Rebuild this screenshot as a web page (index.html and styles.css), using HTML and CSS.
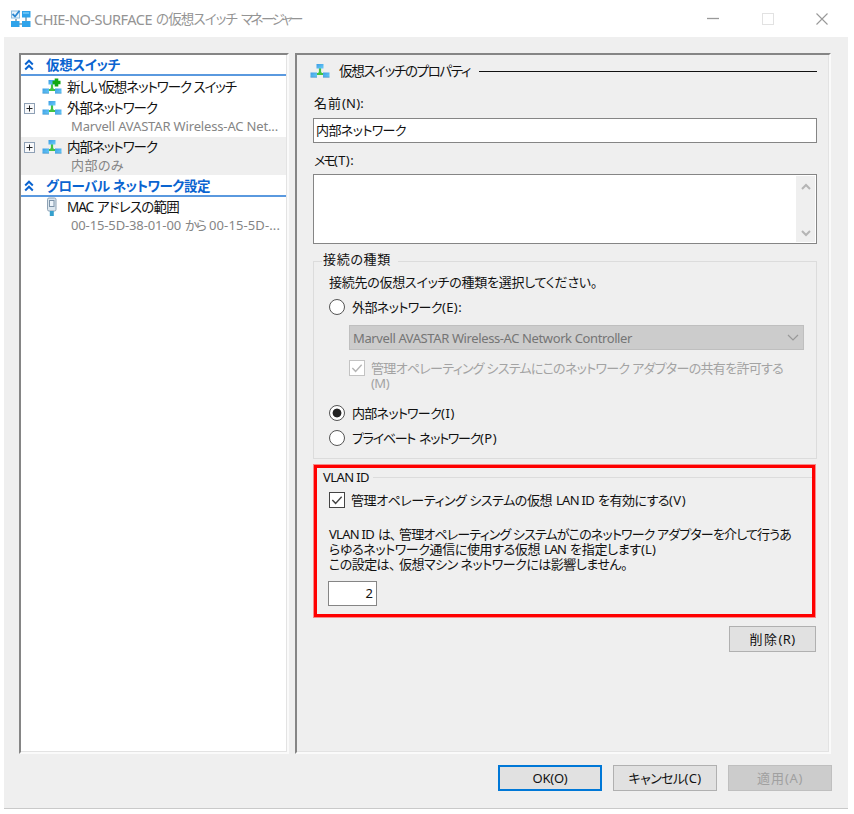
FILE: index.html
```
<!DOCTYPE html>
<html lang="ja">
<head>
<meta charset="utf-8">
<title>仮想スイッチ マネージャー</title>
<link rel="stylesheet" href="styles.css">
</head>
<body>
<svg class="defs" width="0" height="0">
  <defs>
    <linearGradient id="node" x1="0" y1="0" x2="1" y2="1"><stop offset="0" stop-color="#3b9ce4"/><stop offset="1" stop-color="#6accf8"/></linearGradient>
    <symbol id="switch" viewBox="0 0 20 16">
      <path d="M10 5v6M7 11h6" stroke="#43c443" stroke-width="2.2" fill="none"/>
      <path d="M7 12 10 7l3 5z" fill="#43c443"/>
      <rect x="6.500" y="1" width="7" height="4.500" fill="url(#node)"/>
      <rect x="0.500" y="9.500" width="6.500" height="4.500" fill="url(#node)"/>
      <rect x="13" y="9.500" width="6.500" height="4.500" fill="url(#node)"/>
      <path d="M.5 14.200h6.500M13 14.200h6.500" stroke="#348dcd" stroke-width=".8"/>
    </symbol>
    <symbol id="chev" viewBox="0 0 10 12"><path d="M1.200 5.500 5 1.700l3.800 3.800M1.200 10.500 5 6.700l3.800 3.800" fill="none" stroke="#0a64d0" stroke-width="2"/></symbol>
    <symbol id="tick" viewBox="0 0 15 15"><path d="m2.500 7.500 3.500 3.600 6.500-7" fill="none" stroke="currentColor" stroke-width="1.500"/></symbol>
  </defs>
</svg>
<div class="window">
  <header class="titlebar">
    <svg class="app-icon" width="20" height="18" viewBox="0 0 20 18">
      <path d="M5 9v4M15 6v7M5 14h10" stroke="#7c9aac" stroke-width="1.500" fill="none"/>
      <rect x=".5" y="1" width="8" height="7" fill="#e8f3fb" stroke="#8cbcdf"/>
      <path d="m1.500 4 2.500 2.500L8.500.8" fill="none" stroke="#2b87d1" stroke-width="1.800"/>
      <rect x="11" y="1" width="8.500" height="6.500" fill="#2fa3ea"/><rect x="12" y="2" width="6" height="2" fill="#65c1f5"/>
      <rect x="0" y="11" width="8.500" height="6" fill="#2fa3ea"/><rect x="11" y="11" width="8.500" height="6" fill="#2fa3ea"/>
    </svg>
    <span class="title"><span data-w="118">CHIE-NO-SURFACE</span><span class="gap"></span><span class="title-ja" data-w="81">の仮想スイッチ</span><span class="gap"></span><span class="title-ja" data-w="60">マネージャー</span></span>
    <div class="controls">
      <svg width="12" height="12"><path d="M0 5.500h12" stroke="#999" stroke-width="1.300"/></svg>
      <svg width="12" height="12"><rect x=".5" y=".5" width="11" height="11" fill="none" stroke="#e2e2e2"/></svg>
      <svg width="12" height="12"><path d="m.5.5 11 11M11.500.5l-11 11" stroke="#999" stroke-width="1.100"/></svg>
    </div>
  </header>
  <main class="content">
    <div class="panels">
      <nav class="panel tree">
        <div class="section"><svg class="chev"><use href="#chev"/></svg><b data-w="74">仮想スイッチ</b></div>
        <div class="item first">
          <span class="expander none"></span>
          <svg class="sw" viewBox="0 0 20 16"><use href="#switch"/><path d="M14.500-.5v8M10.500 3.500h8" stroke="#11a811" stroke-width="3.600"/></svg>
          <span data-w="169">新しい仮想ネットワーク スイッチ</span>
        </div>
        <div class="item">
          <svg class="expander" viewBox="0 0 11 11"><rect x=".5" y=".5" width="10" height="10" fill="#f7f8fa" stroke="#8ea0b5"/><path d="M2.500 5.500h6M5.500 2.500v6" stroke="#222"/></svg>
          <svg class="sw"><use href="#switch"/></svg><span data-w="90">外部ネットワーク</span>
        </div>
        <div class="sub"><span data-w="207">Marvell AVASTAR Wireless-AC Net...</span></div>
        <div class="selected">
          <div class="item">
            <svg class="expander" viewBox="0 0 11 11"><rect x=".5" y=".5" width="10" height="10" fill="#f7f8fa" stroke="#8ea0b5"/><path d="M2.500 5.500h6M5.500 2.500v6" stroke="#222"/></svg>
            <svg class="sw"><use href="#switch"/></svg><span data-w="90">内部ネットワーク</span>
          </div>
          <div class="sub"><span data-w="53">内部のみ</span></div>
        </div>
        <div class="section"><svg class="chev"><use href="#chev"/></svg><b data-w="164">グローバル ネットワーク設定</b></div>
        <div class="item mac">
          <span class="expander none"></span>
          <svg class="sw" viewBox="0 0 20 20"><rect x="5.500" y="1" width="8.500" height="13" rx="1.500" fill="#dce6ee" stroke="#8ea2b5"/><rect x="7.500" y="3.500" width="4.500" height="6" fill="#edf4fa" stroke="#7d93a8"/><path d="M9.800 14v5" stroke="#35a0cd" stroke-width="4"/></svg>
          <span data-w="26">MAC</span><span class="gap"></span><span data-w="82">アドレスの範囲</span>
        </div>
        <div class="sub"><span data-w="110">00-15-5D-38-01-00</span><span class="gap"></span><span data-w="20">から</span><span class="gap"></span><span data-w="71">00-15-5D-...</span></div>
      </nav>
      <section class="panel props">
        <div class="heading"><svg class="sw"><use href="#switch"/></svg><span data-w="131">仮想スイッチのプロパティ</span><i></i></div>
        <div class="row name-label"><span data-w="28">名前</span><span data-w="22">(N):</span></div>
        <div class="input name"><span data-w="90">内部ネットワーク</span></div>
        <div class="row memo-label"><span data-w="20">メモ</span><span data-w="20">(T):</span></div>
        <div class="input memo">
          <div class="scroll">
            <svg width="10" height="8"><path d="m1 6 4-4 4 4" /></svg>
            <svg width="10" height="8"><path d="m1 2 4 4 4-4" /></svg>
          </div>
        </div>
        <div class="group connection">
          <div class="legend"><span data-w="68">接続の種類</span></div>
          <div class="row desc"><span data-w="268">接続先の仮想スイッチの種類を選択してください。</span></div>
          <div class="row ext"><span class="radio"></span><span data-w="90">外部ネットワーク</span><span data-w="20">(E):</span></div>
          <div class="combo"><span data-w="279">Marvell AVASTAR Wireless-AC Network Controller</span><svg width="12" height="8"><path d="m1 1 5 5 5-5" fill="none" stroke="#999" stroke-width="1.200"/></svg></div>
          <div class="row share"><svg class="check"><use href="#tick"/></svg><span data-w="412">管理オペレーティング システムにこのネットワーク アダプターの共有を許可する</span></div>
          <div class="row share-key"><span data-w="18">(M)</span></div>
          <div class="row int"><span class="radio on"></span><span data-w="89">内部ネットワーク</span><span data-w="14">(I)</span></div>
          <div class="row priv"><span class="radio"></span><span data-w="63">プライベート</span><span class="gap"></span><span data-w="61">ネットワーク</span><span data-w="17">(P)</span></div>
        </div>
        <div class="highlight">
          <div class="vlan-title"><span data-w="46">VLAN ID</span><i></i></div>
          <div class="row enable"><svg class="check"><use href="#tick"/></svg><span data-w="201">管理オペレーティング システムの仮想</span><span class="gap"></span><span data-w="38">LAN ID</span><span class="gap"></span><span data-w="71">を有効にする</span><span data-w="17">(V)</span></div>
          <div class="note">
            <div><span data-w="45">VLAN ID</span><span class="gap"></span><span data-w="17">は、</span><span class="gap"></span><span data-w="392">管理オペレーティング システムがこのネットワーク アダプターを介して行うあ</span></div>
            <div><span data-w="211">らゆるネットワーク通信に使用する仮想</span><span class="gap"></span><span data-w="22">LAN</span><span class="gap"></span><span data-w="71">を指定します</span><span data-w="15">(L)</span></div>
            <div><span data-w="66">この設定は、</span><span class="gap"></span><span data-w="228">仮想マシン ネットワークには影響しません。</span></div>
          </div>
          <div class="input vlan"><span>2</span></div>
        </div>
        <div class="button delete"><span data-w="29">削除</span><span data-w="17">(R)</span></div>
      </section>
    </div>
    <footer class="actions">
      <div class="button ok"><span data-w="35">OK(O)</span></div>
      <div class="button"><span data-w="56">キャンセル</span><span data-w="17">(C)</span></div>
      <div class="button off"><span data-w="28">適用</span><span data-w="18">(A)</span></div>
    </footer>
  </main>
</div>
<script src="fit.js"></script>
</body>
</html>
```
FILE: fit.js
```
document.querySelectorAll('[data-w]').forEach(function (el) {
  var width = Number(el.dataset.w);
  var count = el.textContent.length;
  var natural = el.getBoundingClientRect().width;
  el.style.letterSpacing = (width - natural) / count + 'px';
});
```
FILE: styles.css
```
* { box-sizing: border-box; }
body {
  margin: 0;
  width: 854px;
  height: 814px;
  overflow: hidden;
  background: #fff;
  color: #111;
  font: 13px/14px "Noto Sans", "Noto Sans CJK JP", sans-serif;
  font-feature-settings: "palt";
}
span, b { white-space: pre; flex: none; }
svg { flex: none; display: block; }
.defs { position: absolute; }
.window { width: 844px; margin-left: 4px; }
.titlebar { height: 37px; display: flex; align-items: center; padding-left: 7px; }
.app-icon { margin-right: 3px; }
.title { display: flex; align-items: center; font-size: 14.5px; line-height: 18px; color: #949494; }
.title-ja { font-size: 13.5px; }
.gap { width: 4px; }
.controls { margin-left: auto; margin-right: 20px; display: flex; gap: 42.500px; }
.content { height: 772px; background: #efefef; border-bottom: 1px solid #c9c9c9; padding: 16px 17px 0 15px; }
.panels { display: flex; gap: 6px; height: 701px; }
.panel { border: 2px solid #858585; border-right-color: #fafafa; border-bottom-color: #fafafa; box-shadow: inset -1px -1px #e3e3e3; }
.tree { width: 270px; background: #fff; }
.props { width: 536px; padding: 6px 12px 0 16px; }
.section { height: 21px; margin-right: 1px; padding: 1px 0 0 3px; display: flex; align-items: center; border-bottom: 2px solid #5a99df; color: #0a64d0; }
.section b { font-size: 13.5px; font-weight: 700; }
.chev { width: 10px; height: 12px; margin-right: 12px; }
.item { height: 20px; display: flex; align-items: center; padding-left: 3px; font-size: 13.5px; }
.item.first { height: 22px; }
.expander { width: 11px; height: 11px; margin-right: 7px; flex: none; }
.sw { width: 20px; height: 16px; margin-right: 5px; overflow: visible; }
.sub { height: 18px; padding: 0 0 2px 50px; display: flex; align-items: center; color: #858585; }
.selected { height: 38px; margin: 1px 1px 0 0; background: #efefef; }
.selected .sub { padding-bottom: 3px; }
.selected + .section { height: 22px; }
.mac .sw { height: 20px; }
.heading { height: 20px; display: flex; align-items: center; margin-left: -3px; font-size: 13.5px; }
.heading .sw { margin-right: 9px; }
.heading i { flex: 1; height: 1px; background: #111; margin-left: 9px; }
.row { height: 20px; padding-bottom: 1px; display: flex; align-items: center; }
.name-label { margin-top: 12px; padding-left: 1px; }
.memo-label { margin-top: 7px; padding-left: 1px; }
.input { width: 504px; background: #fff; border: 1px solid #858585; display: flex; align-items: center; }
.name { height: 25px; margin-top: 5px; padding: 0 0 2px 2px; }
.memo { height: 70px; margin-top: 4px; justify-content: flex-end; padding: 1px; }
.scroll { width: 19px; height: 66px; background: #efefef; display: flex; flex-direction: column; align-items: center; justify-content: space-between; padding: 7px 0 5px; }
.scroll path { fill: none; stroke: #b5b5b5; stroke-width: 2; }
.group { width: 504px; height: 198px; margin-top: 17px; padding-left: 15px; border: 1px solid #dcdcdc; }
.legend { width: 76px; height: 20px; margin: -12px 0 0 -7px; padding: 0 0 2px 1px; background: #efefef; display: flex; align-items: center; }
.desc { margin-top: 2px; }
.radio { width: 16px; height: 16px; margin-right: 7px; border: 1px solid #555; border-radius: 50%; background: #fff; }
.radio.on { background: radial-gradient(circle, #222 4px, #fff 4.800px); }
.radio, .check { position: relative; top: .5px; }
.ext { margin-top: 5px; }
.combo { width: 455px; height: 25px; margin: 8px 0 0 20px; padding: 0 4px 0 3px; border: 1px solid #bfbfbf; background: #ccc; color: #757575; display: flex; justify-content: space-between; align-items: center; }
.check { width: 16px; height: 16px; margin-right: 6px; border: 1px solid #444; background: #fff; color: #444; }
.share { margin: 8px 0 0 20px; color: #a3a3a3; }
.share .check { border-color: #c3c3c3; color: #b5b5b5; }
.share-key { height: 16px; margin: -3px 0 0 42px; color: #a3a3a3; }
.int { margin-top: 12px; }
.priv { margin-top: 5px; }
.highlight { width: 501px; height: 152px; margin: 6px 0 0 1px; padding-left: 12px; border: 3px solid #f00; box-shadow: 0 0 0 1px #ff00006b; }
.vlan-title { height: 19px; margin-left: -6px; display: flex; align-items: center; }
.vlan-title span { padding-bottom: 1px; }
.vlan-title i { flex: 1; height: 1px; margin-left: 4px; background: #dcdcdc; }
.enable { margin-top: 3px; }
.note { margin-top: 17px; }
.note div { display: flex; height: 15px; line-height: 14px; }
.vlan { width: 49px; height: 25px; margin-top: 9px; margin-left: -1px; padding: 0 3px 2px 0; justify-content: flex-end; }
.button { width: 104px; height: 26px; padding-bottom: 1px; border: 1px solid #b0b0b0; background: #e1e1e1; display: flex; align-items: center; justify-content: center; }
.delete { width: 87px; margin: 9px 0 0 416px; }
.actions { display: flex; justify-content: flex-end; gap: 11px; margin-top: 11px; margin-right: -1px; }
.ok { border: 2px solid #0078d7; }
.off { background: #ccc; border-color: #bfbfbf; color: #a0a0a0; }
```
